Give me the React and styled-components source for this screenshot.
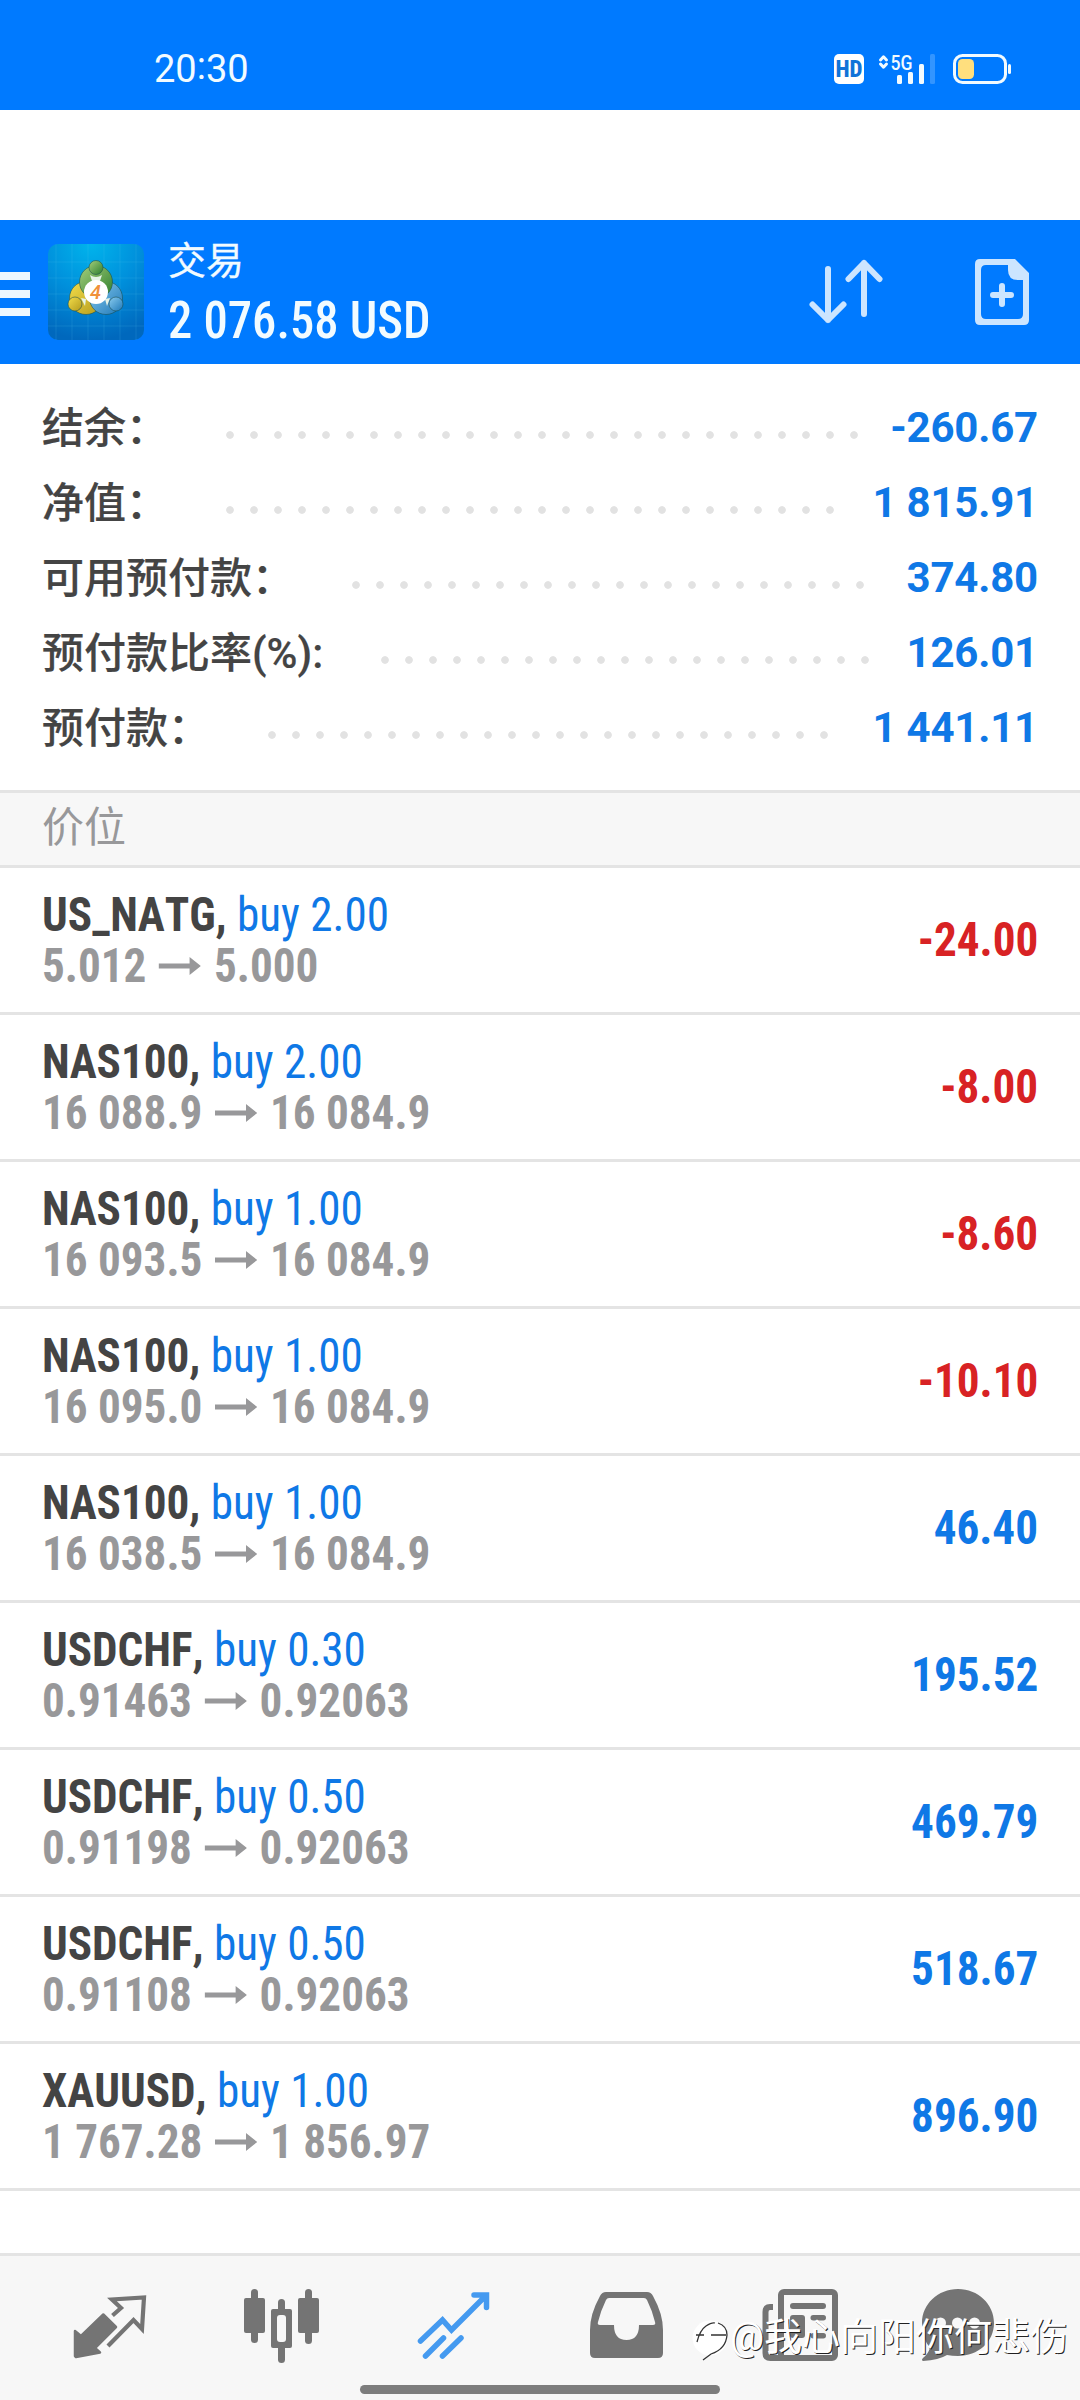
import styled, { createGlobalStyle } from 'styled-components';

const GlobalStyle = createGlobalStyle`
  * {
    box-sizing: border-box;
  }

  body {
    margin: 0;
    background: #fff;
    font-family: Roboto, 'Noto Sans CJK SC', sans-serif;
  }
`;

const Screen = styled.div`
  display: flex;
  flex-direction: column;
  width: 1080px;
  height: 2400px;
  background: #fff;
  overflow: hidden;
`;

const StatusBar = styled.div`
  display: flex;
  align-items: flex-start;
  height: 110px;
  padding: 54px 68px 0 154px;
  background: #007aff;
  color: #f2fbff;
`;

const Clock = styled.div`
  flex: 1;
  font-size: 38px;
  line-height: 31px;

  span {
    position: relative;
    top: -3px;
  }
`;

const HdBadge = styled.div`
  display: flex;
  align-items: center;
  justify-content: center;
  width: 30px;
  height: 30px;
  margin-right: 15px;
  border-radius: 5px;
  background: #fff;
  color: #1173d8;
  font-size: 23px;
  font-weight: 800;
  font-stretch: 75%;
`;

const Signal = styled.svg`
  width: 58px;
  height: 30px;
  margin-right: 16px;
  overflow: visible;
`;

const Battery = styled.svg`
  width: 59px;
  height: 30px;
`;

const Header = styled.header`
  display: flex;
  align-items: center;
  height: 144px;
  margin-top: 110px;
  padding-right: 51px;
  background: #007aff;
  color: #f2fbff;
`;

const Menu = styled.div`
  display: flex;
  flex-direction: column;
  gap: 10px;
  width: 30px;
  margin: 4px 18px 0 0;

  i {
    height: 8px;
    background: #ecf7ff;
  }
`;

const Logo = styled.svg`
  width: 96px;
  height: 96px;
  margin-right: 24px;
`;

const Titles = styled.div`
  flex: 1;
  padding-top: 9px;
`;

const Title = styled.div`
  font-size: 38px;
  line-height: 48px;
  -webkit-text-stroke: 0.3px;
`;

const Total = styled.div`
  font-size: 51px;
  font-weight: 480;
  font-stretch: 75%;
  line-height: 72px;
  transform: scaleX(0.953);
  transform-origin: left;
`;

const HeaderIcon = styled.svg`
  width: ${(p) => p.$width}px;
  height: 68px;
  margin-left: ${(p) => p.$gap || 0}px;
`;

const Summary = styled.section`
  padding: 26px 42px 25px;
  font-size: 42px;
`;

const SummaryRow = styled.div`
  display: flex;
  align-items: center;
  height: 75px;
`;

const Label = styled.span`
  padding-bottom: 6px;
  color: #444;
  font-weight: 500;
  -webkit-text-stroke: 0.2px;
`;

const Dots = styled.span`
  flex: 1;
  height: 8px;
  margin: 15px 28px 0 58px;
  background: radial-gradient(circle at 4px 4px, #e2e2e2 3.4px, transparent 4.2px)
    0 0 / 24px 8px repeat-x;
`;

const SummaryValue = styled.span`
  color: #0f78e6;
  font-weight: 700;
  letter-spacing: -0.2px;
`;

const SectionTitle = styled.div`
  height: 78px;
  padding-left: 42px;
  border-top: 3px solid #e4e4e4;
  border-bottom: 3px solid #e4e4e4;
  background: #f7f7f7;
  color: #98989a;
  font-size: 42px;
  line-height: 70px;
`;

const Position = styled.div`
  display: flex;
  align-items: center;
  justify-content: space-between;
  height: 147px;
  padding: 0 42px;
  border-bottom: 3px solid #e4e4e4;
  font-size: 48px;
  font-stretch: 75%;
  line-height: 51px;
`;

const Deal = styled.div`
  transform: scaleX(0.94);
  transform-origin: left;
`;

const Symbol = styled.div`
  color: #444;
  font-weight: 700;
  font-kerning: none;

  span {
    color: #0f78e6;
    font-weight: 430;
  }
`;

const Prices = styled.div`
  display: flex;
  align-items: center;
  color: #98989a;
  font-weight: 700;
`;

const Arrow = styled.svg`
  width: 45px;
  height: 18px;
  margin: 0 13.5px;
`;

const Profit = styled.div`
  margin-top: -2px;
  color: ${(p) => (p.$loss ? '#d82224' : '#0f78e6')};
  font-weight: 700;
  transform: scaleX(0.94);
  transform-origin: right;
`;

const TabBar = styled.nav`
  position: relative;
  display: flex;
  gap: 92px;
  height: 147px;
  margin-top: auto;
  padding: 30px 0 0 70px;
  border-top: 3px solid #e4e4e4;
  background: #f7f7f7;
`;

const TabIcon = styled.svg`
  flex: none;
  width: 80px;
  height: 80px;
  overflow: visible;
  color: ${(p) => (p.$active ? '#459af0' : '#747474')};
`;

const HomeIndicator = styled.div`
  position: absolute;
  left: 360px;
  bottom: 6px;
  width: 360px;
  height: 9px;
  border-radius: 5px;
  background: #7d7d7d;
`;

const Watermark = styled.div`
  position: absolute;
  left: 692px;
  top: 57px;
  display: flex;
  align-items: center;
  color: #fff;
  font-size: 38px;
  line-height: 48px;
  white-space: nowrap;
  text-shadow: 1px 1px 0 #222;
`;

const WatermarkLogo = styled.svg`
  width: 38px;
  height: 44px;
  margin-top: 4px;
`;

const account = [
  { label: '结余：', value: '-260.67' },
  { label: '净值：', value: '1 815.91' },
  { label: '可用预付款：', value: '374.80' },
  { label: '预付款比率(%):', value: '126.01' },
  { label: '预付款：', value: '1 441.11' },
];

const positions = [
  { symbol: 'US_NATG', volume: '2.00', open: '5.012', current: '5.000', profit: '-24.00' },
  { symbol: 'NAS100', volume: '2.00', open: '16 088.9', current: '16 084.9', profit: '-8.00' },
  { symbol: 'NAS100', volume: '1.00', open: '16 093.5', current: '16 084.9', profit: '-8.60' },
  { symbol: 'NAS100', volume: '1.00', open: '16 095.0', current: '16 084.9', profit: '-10.10' },
  { symbol: 'NAS100', volume: '1.00', open: '16 038.5', current: '16 084.9', profit: '46.40' },
  { symbol: 'USDCHF', volume: '0.30', open: '0.91463', current: '0.92063', profit: '195.52' },
  { symbol: 'USDCHF', volume: '0.50', open: '0.91198', current: '0.92063', profit: '469.79' },
  { symbol: 'USDCHF', volume: '0.50', open: '0.91108', current: '0.92063', profit: '518.67' },
  { symbol: 'XAUUSD', volume: '1.00', open: '1 767.28', current: '1 856.97', profit: '896.90' },
];

function AppLogo() {
  return (
    <Logo viewBox="0 0 96 96">
      <defs>
        <radialGradient id="sky" cx="0.45" cy="0" r="1">
          <stop offset="0" stopColor="#00b4ec" />
          <stop offset="0.5" stopColor="#0090dc" />
          <stop offset="1" stopColor="#0068bd" />
        </radialGradient>
        <linearGradient id="green" x2="1" y2="1">
          <stop offset="0" stopColor="#a5cf7c" />
          <stop offset="1" stopColor="#2c7d2c" />
        </linearGradient>
        <linearGradient id="yellow" x2="1" y2="1">
          <stop offset="0" stopColor="#f3dd4a" />
          <stop offset="1" stopColor="#b39a1c" />
        </linearGradient>
        <linearGradient id="blue" x2="1" y2="1">
          <stop offset="0" stopColor="#8accef" />
          <stop offset="1" stopColor="#1e78b8" />
        </linearGradient>
      </defs>
      <rect width="96" height="96" rx="10" fill="url(#sky)" />
      <path
        d="M8 0v96M24 0v96M40 0v96M56 0v96M72 0v96M88 0v96M0 18h96M0 34h96M0 50h96M0 66h96M0 82h96"
        stroke="#5cc8f5"
        strokeOpacity="0.16"
      />
      <g stroke="#174a4d" strokeOpacity="0.55" strokeWidth="1">
        <circle cx="38" cy="54" r="16.5" fill="url(#yellow)" />
        <circle cx="58" cy="54" r="16.5" fill="url(#blue)" />
        <circle cx="48" cy="38" r="16.5" fill="url(#green)" />
        <circle cx="48" cy="23.5" r="7" fill="url(#green)" />
        <circle cx="27" cy="60" r="7" fill="url(#yellow)" />
        <circle cx="68" cy="60" r="7" fill="url(#blue)" />
      </g>
      <path d="M42 31q6 4 12 0l-2 6h-8zM33 54l5 1-1 7zM62 54l-5 1 2 7z" fill="#e6f3e6" />
      <circle cx="48" cy="48" r="12" fill="#fff" />
      <text x="47.5" y="55" textAnchor="middle" fontSize="20" fontWeight="500" fontStyle="italic" fill="#f0913a">
        4
      </text>
    </Logo>
  );
}

function StatusIcons() {
  return (
    <>
      <HdBadge>HD</HdBadge>
      <Signal viewBox="879 54 58 30" fill="#f2fbff">
        <path
          d="M880.5 60l3-3.2 3 3.2M880.5 64l3 3.2 3-3.2"
          fill="none"
          stroke="#f2fbff"
          strokeWidth="3"
          strokeLinecap="round"
          strokeLinejoin="round"
        />
        <text x="890.5" y="69.5" fontSize="20" fontWeight="500" textLength="22" lengthAdjust="spacingAndGlyphs">
          5G
        </text>
        <rect x="897" y="75" width="5" height="9" rx="1.5" />
        <rect x="908" y="72" width="5" height="12" rx="1.5" />
        <rect x="919" y="64" width="5" height="20" rx="1.5" />
        <rect x="930" y="54" width="5" height="30" rx="1.5" fill="#3395ff" />
      </Signal>
      <Battery viewBox="953 54 59 30">
        <rect x="954.5" y="55.5" width="51" height="27" rx="8" fill="none" stroke="#f2fbff" strokeWidth="3" />
        <rect x="958" y="59" width="16" height="20" rx="4.5" fill="#ffdf7e" />
        <rect x="1008" y="64" width="3" height="10" rx="1.5" fill="#f2fbff" />
      </Battery>
    </>
  );
}

function HeaderActions() {
  return (
    <>
      <HeaderIcon
        $width={74}
        viewBox="809 258 74 68"
        fill="none"
        stroke="#cce5ff"
        strokeWidth="6"
        strokeLinecap="round"
        strokeLinejoin="round"
      >
        <path d="M828 269v51M812.5 304.5l15.5 15.5 15.5-15.5" />
        <path d="M864 314v-51M848.5 279l15.5-16 15.5 16" />
      </HeaderIcon>
      <HeaderIcon $width={54} $gap={92} viewBox="975 258 54 68" fill="#cce5ff">
        <path
          fillRule="evenodd"
          d="M980 259h35l14 14v47q0 5-5 5h-44q-5 0-5-5v-56q0-5 5-5zM986 265q-5 0-5 5v44q0 5 5 5h32q5 0 5-5v-34h-5q-10 0-10-10v-5z"
        />
        <path d="M1002 286v18M993 295h18" stroke="#cce5ff" strokeWidth="6" strokeLinecap="round" />
      </HeaderIcon>
    </>
  );
}

function Tabs() {
  return (
    <>
      <TabIcon viewBox="70 2286 80 80">
        <path
          d="M103.3 2314.5l12.7 12.5-21 21 5 4.5-24 4.5-1-1v-25l6 5z"
          fill="currentColor"
          stroke="currentColor"
          strokeWidth="2.5"
          strokeLinejoin="round"
        />
        <path
          d="M112.5 2315.5l8.5-7.5-9-8.5 32-2-2 31.5-8.5-9-25.5 26"
          fill="none"
          stroke="currentColor"
          strokeWidth="4.2"
        />
      </TabIcon>
      <TabIcon viewBox="242 2286 80 80" fill="currentColor">
        <rect x="244" y="2298" width="21" height="35" rx="2" />
        <rect x="251" y="2289" width="7" height="54" rx="3.5" />
        <rect x="271" y="2309" width="21" height="39" rx="2" />
        <rect x="278" y="2299" width="7" height="64" rx="3.5" />
        <rect x="277" y="2315" width="9" height="27" rx="3" fill="#f7f7f7" />
        <rect x="298" y="2298" width="21" height="35" rx="2" />
        <rect x="305" y="2289" width="7" height="55" rx="3.5" />
      </TabIcon>
      <TabIcon
        $active
        viewBox="414 2286 80 80"
        fill="none"
        stroke="currentColor"
        strokeWidth="5.5"
        strokeLinecap="round"
      >
        <path d="M420.5 2341l22-21 9 10 34-34M474 2295h12.5v12.5" />
        <path d="M443.5 2338l-18 18M461 2338l-18.5 18" />
      </TabIcon>
      <TabIcon viewBox="586 2286 80 80">
        <path
          fill="currentColor"
          fillRule="evenodd"
          d="M606 2292h41q4 0 6 4 10 18 10 34v23q0 5-5 5h-63q-5 0-5-5v-23q0-16 10-34 2-4 6-4zM609 2298q-2 0-3 2-5 10-8 22-1 3 2 3h14q0 15 12.5 15t12.5-15h14q3 0 2-3-3-12-8-22-1-2-3-2z"
        />
      </TabIcon>
      <TabIcon viewBox="758 2286 80 80" fill="currentColor">
        <rect x="781" y="2292" width="54" height="66" rx="3" fill="none" stroke="currentColor" strokeWidth="6" />
        <path d="M773 2307h-3q-4.5 0-4.5 5v41q0 5 5 5h14" fill="none" stroke="currentColor" strokeWidth="6" />
        <rect x="790" y="2303" width="36" height="6" rx="3" />
        <rect x="790" y="2315" width="15" height="23" rx="3" />
        <rect x="810.5" y="2315" width="15.5" height="5.5" rx="2.7" />
        <rect x="810.5" y="2333" width="15.5" height="5.5" rx="2.7" />
      </TabIcon>
      <TabIcon viewBox="930 2286 80 80" fill="currentColor">
        <path d="M958 2289c20 0 36 15 36 34s-16 33-36 33q-6 0-11-1-8 5-24 6-2-1 0-3 5-4 7-10-8-10-8-25c0-19 16-34 36-34z" />
        <g fill="#f7f7f7">
          <circle cx="940.5" cy="2323" r="5.5" />
          <circle cx="957.5" cy="2323" r="5.5" />
          <circle cx="974.5" cy="2323" r="5.5" />
        </g>
      </TabIcon>
    </>
  );
}

export default function App() {
  return (
    <Screen>
      <GlobalStyle />
      <StatusBar>
        <Clock>
          20<span>:</span>30
        </Clock>
        <StatusIcons />
      </StatusBar>
      <Header>
        <Menu>
          <i />
          <i />
          <i />
        </Menu>
        <AppLogo />
        <Titles>
          <Title>交易</Title>
          <Total>2 076.58 USD</Total>
        </Titles>
        <HeaderActions />
      </Header>
      <Summary>
        {account.map((row) => (
          <SummaryRow key={row.label}>
            <Label>{row.label}</Label>
            <Dots />
            <SummaryValue>{row.value}</SummaryValue>
          </SummaryRow>
        ))}
      </Summary>
      <SectionTitle>价位</SectionTitle>
      {positions.map((p) => (
        <Position key={p.symbol + p.open}>
          <Deal>
            <Symbol>
              {p.symbol}, <span>buy {p.volume}</span>
            </Symbol>
            <Prices>
              {p.open}
              <Arrow viewBox="0 0 45 18">
                <path d="M0 6.5h33V0l12 9-12 9v-6.5H0z" fill="currentColor" />
              </Arrow>
              {p.current}
            </Prices>
          </Deal>
          <Profit $loss={p.profit.startsWith('-')}>{p.profit}</Profit>
        </Position>
      ))}
      <TabBar>
        <Tabs />
        <Watermark>
          <WatermarkLogo viewBox="692 2319 38 44">
            <circle cx="710" cy="2340" r="17.5" fill="#fff" />
            <path
              d="M697 2344q3-12 9-16t9-3M718 2325q9 3 9 12-1 14-16 19l-8 6M696 2337h8M711 2337h15"
              fill="none"
              stroke="#333"
              strokeWidth="1.3"
            />
          </WatermarkLogo>
          @我心向阳你何悲伤
        </Watermark>
        <HomeIndicator />
      </TabBar>
    </Screen>
  );
}
